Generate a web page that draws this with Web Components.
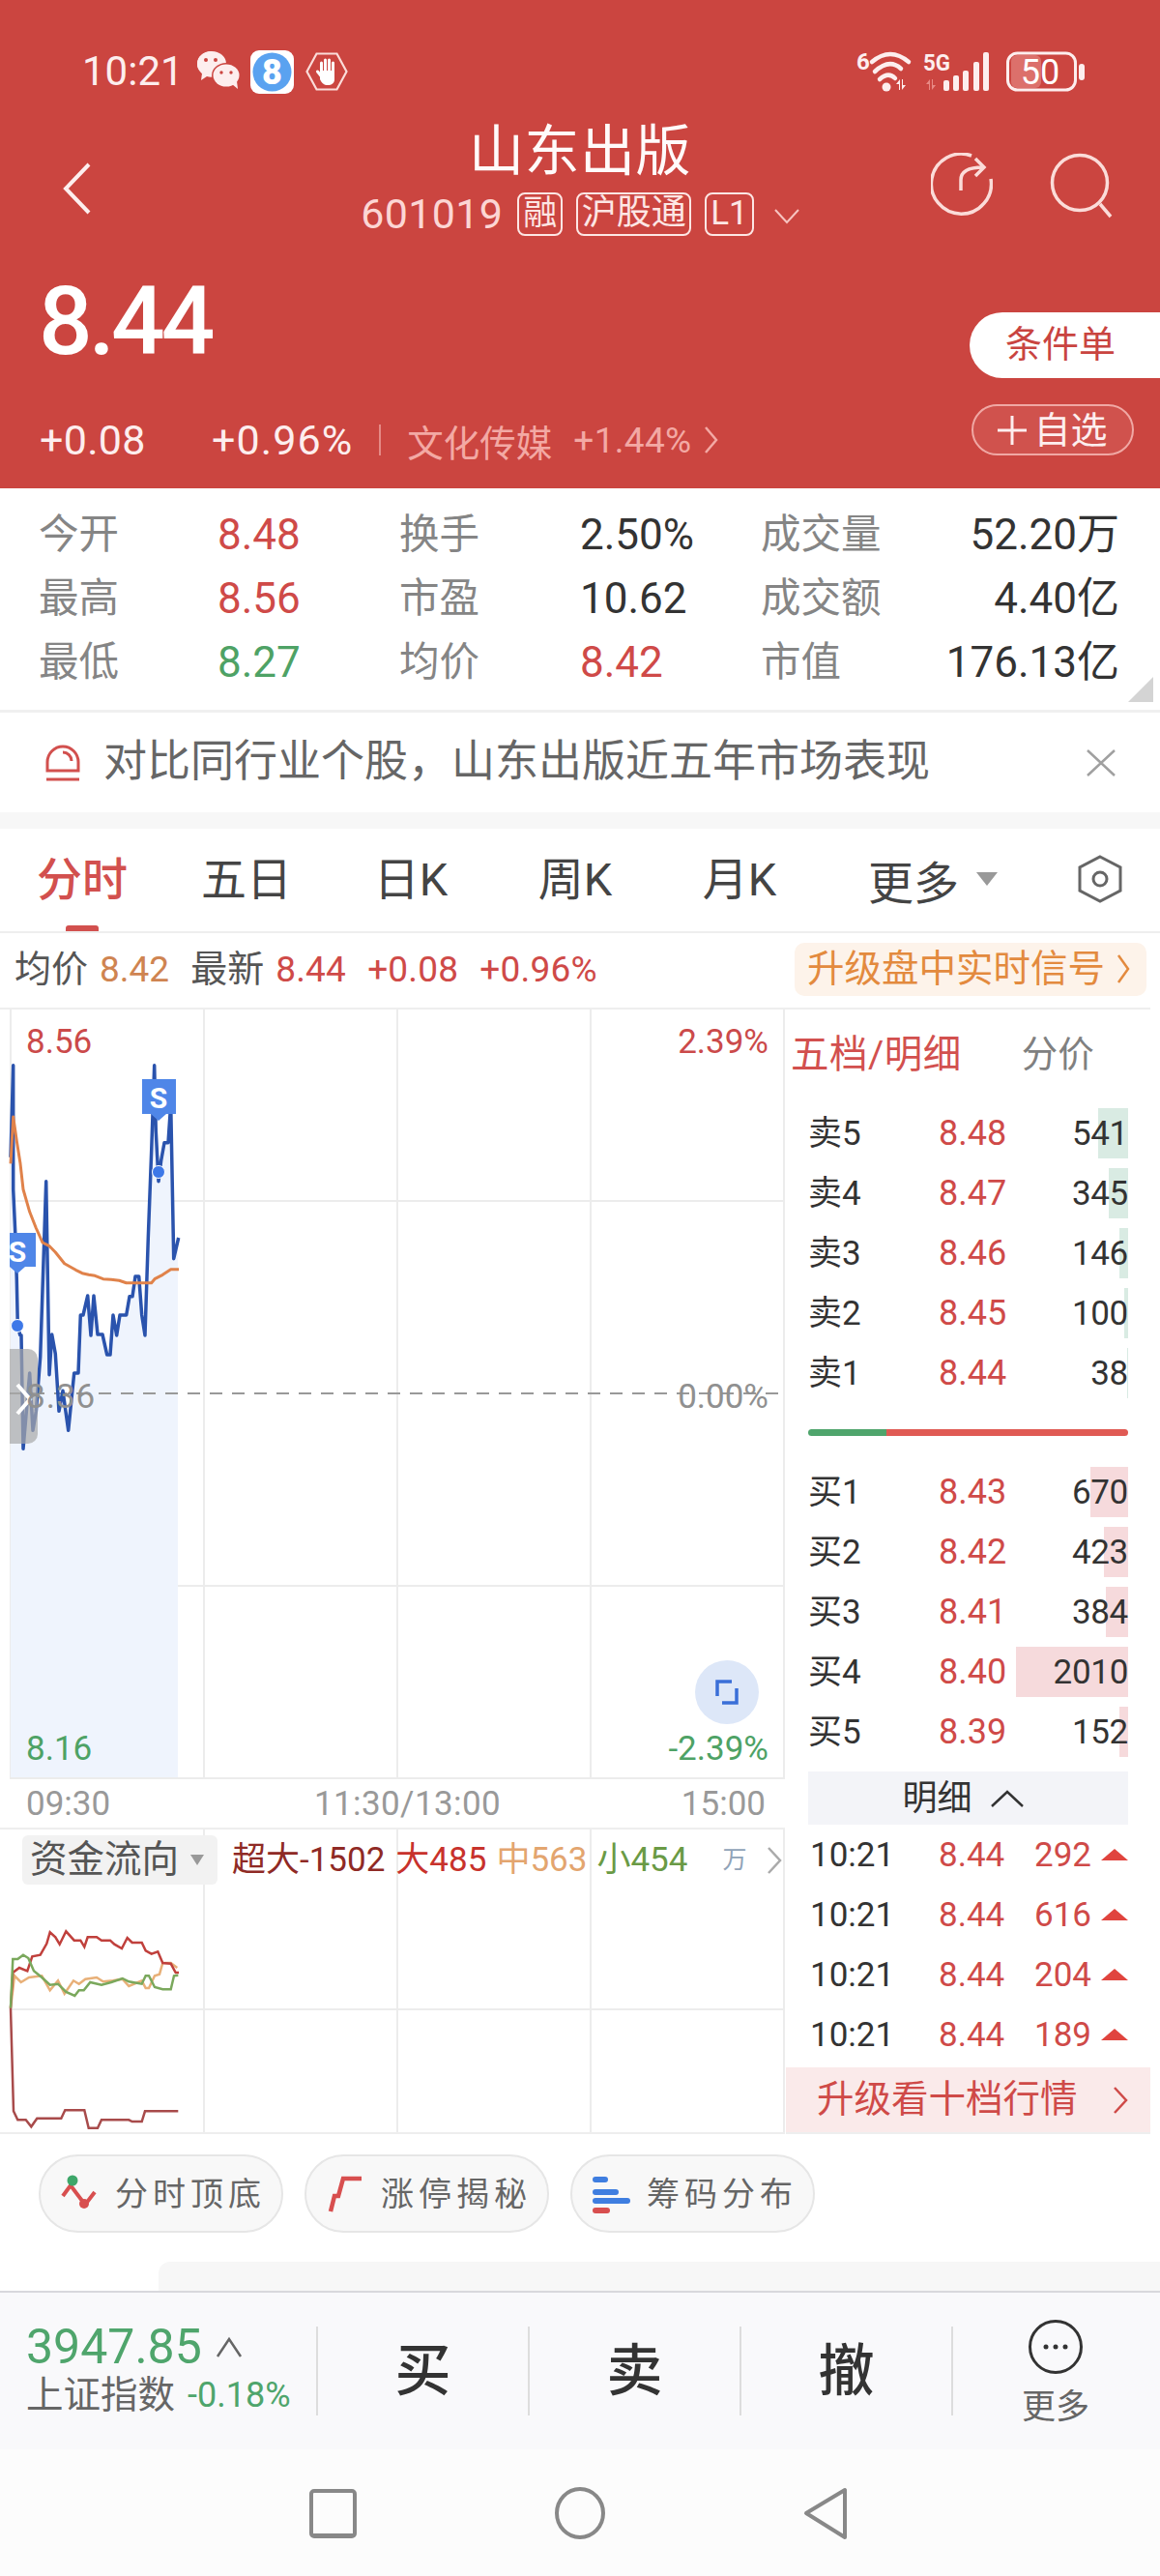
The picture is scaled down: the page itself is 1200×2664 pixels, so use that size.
<!DOCTYPE html>
<html lang="zh-CN"><head><meta charset="utf-8"><title>山东出版</title>
<style>
html,body{margin:0;padding:0;background:#fff}
body{font-family:Roboto,"Noto Sans CJK SC",sans-serif;width:1200px}
</style></head><body>
<stock-page>
  <status-bar></status-bar>
  <stock-header></stock-header>
  <stat-grid></stat-grid>
  <promo-banner></promo-banner>
  <chart-tabs></chart-tabs>
  <quote-line></quote-line>
  <chart-board>
    <minute-chart slot="left"></minute-chart>
    <time-axis slot="left"></time-axis>
    <flow-chart slot="left"></flow-chart>
    <order-book slot="right">
      <book-row label="卖5" price="8.48" vol="541" bar="31" side="sell"></book-row>
      <book-row label="卖4" price="8.47" vol="345" bar="20" side="sell"></book-row>
      <book-row label="卖3" price="8.46" vol="146" bar="9" side="sell"></book-row>
      <book-row label="卖2" price="8.45" vol="100" bar="4" side="sell"></book-row>
      <book-row label="卖1" price="8.44" vol="38" bar="1" side="sell"></book-row>
      <ratio-bar></ratio-bar>
      <book-row label="买1" price="8.43" vol="670" bar="39" side="buy"></book-row>
      <book-row label="买2" price="8.42" vol="423" bar="25" side="buy"></book-row>
      <book-row label="买3" price="8.41" vol="384" bar="23" side="buy"></book-row>
      <book-row label="买4" price="8.40" vol="2010" bar="116" side="buy"></book-row>
      <book-row label="买5" price="8.39" vol="152" bar="9" side="buy"></book-row>
      <detail-head></detail-head>
      <tick-row vol="292"></tick-row>
      <tick-row vol="616"></tick-row>
      <tick-row vol="204"></tick-row>
      <tick-row vol="189"></tick-row>
      <upgrade-strip></upgrade-strip>
    </order-book>
  </chart-board>
  <tool-chips>
    <tool-chip kind="a">分时顶底</tool-chip>
    <tool-chip kind="b">涨停揭秘</tool-chip>
    <tool-chip kind="c">筹码分布</tool-chip>
  </tool-chips>
  <trade-bar></trade-bar>
  <nav-bar></nav-bar>
</stock-page>
<script>
const FONT='font-family:Roboto,"Noto Sans CJK SC",sans-serif;';
function el(name,css,html){
  customElements.define(name,class extends HTMLElement{
    constructor(){super();this.attachShadow({mode:'open'});}
    connectedCallback(){
      const a=n=>this.getAttribute(n)||'';
      this.shadowRoot.innerHTML='<style>'+css+'</style>'+(typeof html==='function'?html(a):html);
    }
  });
}
const pts=(arr,ox,oy,s)=>arr.map(p=>(ox+p[0]*s).toFixed(1)+','+(oy+p[1]*s).toFixed(1)).join(' ');

el('stock-page',`:host{display:flex;flex-direction:column;width:1200px;height:2664px;overflow:hidden;background:#fff;color:#333;${FONT}}`,`<slot></slot>`);

el('status-bar',`:host{display:flex;justify-content:space-between;align-items:center;height:118px;padding:30px 77px 0 85px;box-sizing:border-box;background:#cb4540;color:#fdeeee}
.l{display:flex;align-items:center}.t{font-size:42px;width:119px;line-height:46px}
svg{display:block;overflow:visible}text{font-family:Roboto,sans-serif}`,
`<div class="l"><span class="t">10:21</span>
<svg width="44" height="40" viewBox="204 55 44 40" style="margin-right:11px"><path d="M219 54c-9 0-15 6-15 13 0 5 3 8 5 10l-1 7 6-4c3 1 5 1 8 0z" fill="#fdeeee"/><ellipse cx="219" cy="67" rx="15" ry="13" fill="#fdeeee"/><ellipse cx="234" cy="79" rx="15" ry="13" fill="#cb4540"/><ellipse cx="234" cy="79" rx="13.500" ry="11.500" fill="#fdeeee"/><path d="M240 88l6 5-1-8z" fill="#fdeeee"/><circle cx="213" cy="63" r="2" fill="#cb4540"/><circle cx="223" cy="63" r="2" fill="#cb4540"/><circle cx="229" cy="76" r="1.700" fill="#cb4540"/><circle cx="239" cy="76" r="1.700" fill="#cb4540"/></svg>
<svg width="45" height="45" viewBox="0 0 45 45" style="margin-right:12px"><rect width="45" height="45" rx="9" fill="#fff"/><circle cx="22.500" cy="22.500" r="20" fill="#5aa2f0"/><text x="22.500" y="35" text-anchor="middle" font-size="36" font-weight="900" fill="#fff">8</text></svg>
<svg width="44" height="40" viewBox="0 0 44 40"><path d="M1.500 20 11.500 1.500h21L42.500 20l-10 18.500h-21z" fill="none" stroke="#fbdcd9" stroke-width="2.200"/><g stroke="#fff" stroke-width="3" stroke-linecap="round"><path d="M16.500 11v10M20.500 8v12M24.500 8v12M28.500 11v11"/><path d="M12.500 20l4 5"/></g><path d="M15 19h15v9c0 4-3 6-7 6s-6-2-8-6z" fill="#fff"/></svg></div>
<svg width="238" height="60" viewBox="886 43 238 60"><text x="887" y="71" font-size="24" font-weight="700" fill="#fdeeee">6</text>
<g fill="none" stroke="#fdeeee" stroke-width="4.500" stroke-linecap="round"><path d="M903 63Q922 47 941 63"/><path d="M906 73Q921 59 933 70"/><path d="M911 81Q920 73 927 80"/></g><circle cx="918" cy="89" r="4.500" fill="#fdeeee"/>
<path d="M931 92v-6h-3l4-5v11zM935 81v6h3l-4 5V81z" fill="#fdeeee"/>
<text x="956" y="72" font-size="23" font-weight="700" fill="#fdeeee" textLength="28" lengthAdjust="spacingAndGlyphs">5G</text>
<path d="M962 92v-6h-3l4-5v11zM966 81v6h3l-4 5V81z" fill="#e88a85"/>
<g fill="#fdeeee"><rect x="977" y="82" width="6" height="11" rx="2"/><rect x="987" y="77" width="6" height="16" rx="2"/><rect x="997" y="72" width="6" height="21" rx="2"/><rect x="1008" y="63" width="6" height="30" rx="2"/><rect x="1018" y="53" width="6" height="40" rx="2"/></g>
<rect x="1047" y="56" width="31" height="34" rx="6" fill="#dc706b"/><rect x="1043.500" y="54" width="70" height="38" rx="10" fill="none" stroke="#fdeeee" stroke-width="3"/><text x="1077" y="86" text-anchor="middle" font-size="36" fill="#fff">50</text><rect x="1117" y="65" width="6" height="17" rx="3" fill="#fdeeee"/></svg>`);

el('stock-header',`:host{display:block;background:#cb4540;height:387px;color:#fff;position:relative}
.top{display:grid;grid-template-columns:1fr 520px 1fr;height:130px}
.back{padding:50px 0 0 64px}.ctr{display:flex;flex-direction:column;align-items:center}
.name{font-size:57px;line-height:78px;height:78px;letter-spacing:.5px;color:#fffafa}
.sub{display:flex;align-items:center;gap:14px;height:50px;color:#fcd6d4;font-size:43px;white-space:nowrap;flex:none}
.code{letter-spacing:.3px;margin-right:1px}
.tag{flex:none;border:2px solid #fde6e4;border-radius:8px;height:41px;line-height:39px;font-size:35px;padding:0 4px;color:#fde6e4;box-sizing:content-box}
.tag.w{padding:0 3.500px;font-size:36px}
.ic{display:flex;justify-content:flex-end;padding:40px 48px 0 0;gap:59px}
.main{display:flex;justify-content:space-between}
.price{font-size:98px;line-height:96px;margin:37px 0 0 40px;font-weight:500;letter-spacing:-4px}
.chg{display:flex;align-items:center;height:50px;margin:49px 0 0 41px;font-size:43px;letter-spacing:.3px;color:#fdeeee;white-space:nowrap}
.wide{letter-spacing:1.100px}
.sep{width:2px;height:32px;background:#e58a86;margin:0 27px}
.ind{color:#f3a9a4;font-size:37.500px;letter-spacing:0}.pc{color:#f3a9a4;font-size:37px;letter-spacing:.3px;margin-left:22px}
.r{display:flex;flex-direction:column;align-items:flex-end}
.cond{margin-top:75px;width:197px;height:68px;background:#fff;border-radius:34px 0 0 34px;color:#c94440;font-size:38px;line-height:66px;box-sizing:border-box;padding-left:37px}
.fav{margin:27px 27px 0 0;width:168px;height:53px;border:2px solid #f0a8a4;border-radius:27px;box-sizing:border-box;background:#d0524d;color:#fdeeee;font-size:38px;display:flex;align-items:center;justify-content:center;gap:7px;line-height:1}`,
`<div class="top"><div class="back"><svg width="30" height="54" viewBox="62 166 30 54"><path d="M90 168 66 193l24 25" fill="none" stroke="#fdeeee" stroke-width="4"/></svg></div>
<div class="ctr"><div class="name">山东出版</div><div class="sub"><span class="code">601019</span><span class="tag">融</span><span class="tag w">沪股通</span><span class="tag">L1</span><svg width="26" height="16" viewBox="0 0 26 16" style="margin:6px 0 0 7px"><path d="M1 1l12 13L25 1" fill="none" stroke="#f7c4c0" stroke-width="2"/></svg></div></div>
<div class="ic"><svg width="64" height="66" viewBox="965 159 64 66"><path d="M1007 162A31 31 0 1 0 1027 186" fill="none" stroke="#fbdcd9" stroke-width="3.500"/><path d="M996 198v-11c0-8 6-13 23-13M1011 165l9 9-9 9" fill="none" stroke="#fbdcd9" stroke-width="3.500"/></svg>
<svg width="66" height="68" viewBox="1087 158 66 68"><circle cx="1118" cy="189" r="28.500" fill="none" stroke="#fbdcd9" stroke-width="3.500"/><path d="M1139 211l11 13" stroke="#fbdcd9" stroke-width="3.500" fill="none"/></svg></div></div>
<div class="main"><div><div class="price">8.44</div>
<div class="chg"><span style="width:178px">+0.08</span><span class="wide">+0.96%</span><span class="sep"></span><span class="ind">文化传媒</span><span class="pc">+1.44%</span><svg width="14" height="30" viewBox="0 0 14 30" style="margin-left:14px"><path d="M1 2l11 13L1 28" fill="none" stroke="#f3a9a4" stroke-width="2.500"/></svg></div></div>
<div class="r"><div class="cond">条件单</div><div class="fav"><svg width="30" height="30" viewBox="0 0 30 30"><path d="M15 0v30M0 15h30" stroke="#fdeeee" stroke-width="3"/></svg><span>自选</span></div></div></div>`);

el('stat-grid',`:host{display:grid;grid-template-columns:185px 188px 187px 187px 1fr;grid-auto-rows:66px;align-items:center;height:232px;box-sizing:border-box;padding:15px 42px 0 40px;border-bottom:3px solid #f0f0f0;position:relative;background:#fff;font-size:44px;color:#333;line-height:1;flex:none}
.k{color:#858585;font-size:41.500px}.up{color:#cf4a48}.dn{color:#4ea265}
.lr{display:flex;justify-content:space-between;align-items:center}
.tri{position:absolute;right:7px;bottom:8px;width:0;height:0;border-left:26px solid transparent;border-bottom:26px solid #d4d4d4}`,
`<span class="k">今开</span><span class="up">8.48</span><span class="k">换手</span><span>2.50%</span><span class="lr"><span class="k">成交量</span><span>52.20万</span></span>
<span class="k">最高</span><span class="up">8.56</span><span class="k">市盈</span><span>10.62</span><span class="lr"><span class="k">成交额</span><span>4.40亿</span></span>
<span class="k">最低</span><span class="dn">8.27</span><span class="k">均价</span><span class="up">8.42</span><span class="lr"><span class="k">市值</span><span>176.13亿</span></span>
<i class="tri"></i>`);

el('promo-banner',`:host{display:flex;align-items:center;height:103px;padding:0 45px 0 46px;background:#fff;border-bottom:17px solid #f7f7f7;box-sizing:content-box;color:#666;font-size:45px;flex:none}
span{flex:1;margin-left:23px;line-height:1;padding-bottom:2px}svg{display:block}`,
`<svg width="38" height="40" viewBox="0 0 38 40"><path d="M3 28V19a16 16 0 0 1 32 0v9zM2 28h34M2 37h34" fill="none" stroke="#d2504e" stroke-width="3"/><path d="M19 9a9 9 0 0 1 9 9" fill="none" stroke="#d2504e" stroke-width="3"/></svg>
<span>对比同行业个股，山东出版近五年市场表现</span>
<svg width="32" height="30" viewBox="0 0 32 30"><path d="M2 2l28 26M30 2 2 28" stroke="#a0a0a0" stroke-width="2.500"/></svg>`);

el('chart-tabs',`:host{display:flex;align-items:center;height:108px;box-sizing:border-box;border-bottom:2px solid #eee;background:#fff;font-size:47px;color:#444;padding-bottom:2px;position:relative;flex:none}
.t{width:170px;text-align:center;line-height:1;flex:none}.on{color:#d2504e;font-weight:500}
.u{position:absolute;left:68px;bottom:0;width:34px;height:6px;background:#d2504e;border-radius:3px 3px 0 0}
.more{margin-left:48px;display:flex;align-items:center}.tr{width:0;height:0;border:11px solid transparent;border-top:14px solid #999;border-bottom:0;margin-left:18px}
svg{margin-left:83px;display:block}`,
`<span class="t on">分时</span><span class="t">五日</span><span class="t">日K</span><span class="t">周K</span><span class="t">月K</span><i class="u"></i>
<span class="more">更多<i class="tr"></i></span>
<svg width="46" height="50" viewBox="0 0 46 50"><path d="M23 2 44 13v24L23 48 2 37V13z" fill="none" stroke="#666" stroke-width="3"/><circle cx="23" cy="25" r="7" fill="none" stroke="#666" stroke-width="3"/></svg>`);

el('quote-line',`:host{display:flex;align-items:center;height:77px;padding:0 14px 3px 15px;box-sizing:border-box;background:#fff;font-size:37px;line-height:1;color:#555;flex:none}
.k{font-size:38px;margin-right:12px}.o{color:#cf8451;margin-right:22px}.r{color:#cf4a48;margin-right:22px;letter-spacing:.2px}
.up{margin-left:auto;width:364px;height:55px;background:#fdf3ea;border-radius:10px;color:#e38a3e;font-size:38.500px;display:flex;align-items:center;padding-left:13px;box-sizing:border-box;gap:12px}`,
`<span class="k">均价</span><span class="o">8.42</span><span class="k">最新</span><span class="r">8.44</span><span class="r">+0.08</span><span class="r">+0.96%</span>
<span class="up">升级盘中实时信号<svg width="14" height="32" viewBox="0 0 14 32"><path d="M2 2l10 14L2 30" fill="none" stroke="#e38a3e" stroke-width="2.500"/></svg></span>`);

el('chart-board',`:host{display:flex;width:1190px;height:1165px;border-top:2px solid #eee;box-sizing:border-box;background:#fff;flex:none}
.l{width:812px;flex:none;display:flex;flex-direction:column}.r{flex:1;display:flex;flex-direction:column;min-width:0}`,
`<div class="l"><slot name="left"></slot></div><div class="r"><slot name="right"></slot></div>`);

const blue=[[33,500],[41,215],[41,600],[47,730],[52,880],[55,1020],[62,1052],[66,1052],[72,1405],[92,1170],[102,1348],[112,1290],[125,1120],[143,575],[153,1175],[161,1050],[172,1110],[183,1288],[195,1225],[212,1348],[230,1170],[243,1170],[250,990],[258,990],[272,930],[282,1053],[291,930],[303,1050],[318,1050],[332,1113],[342,1113],[351,990],[362,1053],[372,990],[392,990],[402,932],[411,932],[420,870],[431,870],[440,990],[450,1053],[460,750],[470,480],[479,215],[484,420],[492,575],[500,510],[510,455],[522,455],[530,335],[539,815],[554,750]];
const orange=[[33,520],[41,375],[52,450],[63,520],[72,600],[92,670],[112,720],[132,765],[152,775],[172,795],[200,830],[235,850],[255,860],[275,865],[295,868],[320,878],[345,880],[370,883],[392,890],[430,890],[470,890],[480,878],[505,865],[530,848],[555,848]];
const OY=1030-1044;
el('minute-chart',`:host{display:block;width:812px;height:796px;flex:none}svg{display:block}text{font-family:Roboto,sans-serif;font-size:35px}.s{font-size:30px;font-weight:700;fill:#fff}`,
()=>`<svg width="812" height="796" viewBox="0 0 812 796">
<defs><clipPath id="c"><rect x="10" y="0" width="802" height="796"/></clipPath></defs>
<path d="M11 0V796M211 0V796M411 0V796M611 0V796M811 0V796" stroke="#ececec" stroke-width="2" fill="none"/>
<path d="M10 198H812M10 596H812M10 795H812" stroke="#ececec" stroke-width="2" fill="none"/>
<polygon points="11,${(OY+500/3).toFixed(1)} ${pts(blue,0,OY,1/3)} 184,${(OY+750/3).toFixed(1)} 184,794 11,794" fill="#eff4fd"/>
<path d="M10 397H812" stroke="#999" stroke-width="2" stroke-dasharray="13 10" fill="none"/>
<polyline points="${pts(blue,0,OY,1/3)}" fill="none" stroke="#2a53ad" stroke-width="3.500" stroke-linejoin="round"/>
<polyline points="${pts(orange,0,OY,1/3)}" fill="none" stroke="#e0824a" stroke-width="3" stroke-linejoin="round"/>
<path d="M10 351H29a10 10 0 0 1 10 10v78a10 10 0 0 1-10 10H10z" fill="#a8a8a8" fill-opacity=".7"/>
<path d="M18 388l13 15-13 15" fill="none" stroke="#fff" stroke-width="4"/>
<text x="27" y="45" fill="#cb4a4a">8.56</text><text x="795" y="45" text-anchor="end" fill="#cb4a4a">2.39%</text>
<text x="27" y="412" fill="#909090" letter-spacing="1">8.36</text><text x="795" y="412" text-anchor="end" fill="#909090">0.00%</text>
<text x="27" y="776" fill="#4ea265">8.16</text><text x="795" y="776" text-anchor="end" fill="#4ea265">-2.39%</text>
<g clip-path="url(#c)"><path d="M147 72h35v36h-10l-8 7-8-7h-9z" fill="#4f86e8"/><text class="s" x="164" y="102" text-anchor="middle">S</text>
<path d="M5 231h32v35h-11l-8 7-8-7H5z" fill="#4f86e8"/><text class="s" x="18" y="261" text-anchor="middle">S</text>
<circle cx="164" cy="168" r="6.500" fill="#3d78e8" stroke="#fff"/><circle cx="18" cy="327" r="6.500" fill="#3d78e8" stroke="#fff"/></g>
<circle cx="752" cy="706" r="33" fill="#dde7f8"/><path d="M742 710v-15h15M762 702v15h-15" fill="none" stroke="#3a6fd8" stroke-width="3.500"/>
</svg>`);

el('time-axis',`:host{display:flex;justify-content:space-between;align-items:center;height:50px;width:812px;box-sizing:border-box;padding:0 20px 0 27px;font-size:35px;color:#999;line-height:1;flex:none}
.m{margin-left:24px;letter-spacing:.4px}`,
`<span>09:30</span><span class="m">11:30/13:00</span><span>15:00</span>`);

const fr=[[33,290],[40,180],[60,165],[85,175],[100,130],[125,125],[145,90],[155,55],[172,70],[185,92],[205,52],[230,80],[250,80],[262,100],[272,70],[300,70],[315,80],[342,80],[355,92],[378,105],[395,72],[410,87],[440,87],[452,112],[470,122],[490,115],[505,150],[530,152],[545,180],[555,180]];
const fo=[[33,290],[45,190],[65,210],[90,195],[130,190],[155,235],[180,205],[200,245],[228,205],[245,215],[265,200],[300,195],[320,208],[350,205],[380,200],[400,222],[440,205],[452,228],[462,228],[480,190],[495,185],[505,150],[530,150],[550,165]];
const fg=[[33,290],[40,138],[55,138],[72,125],[88,135],[105,175],[130,195],[155,218],[180,215],[205,240],[232,252],[245,235],[260,235],[280,210],[315,218],[345,210],[380,198],[400,208],[440,215],[452,190],[462,190],[480,225],[505,232],[530,232],[540,190],[553,188]];
const fd=[[33,290],[42,610],[55,637],[80,637],[97,658],[115,632],[190,632],[202,607],[262,607],[275,662],[303,662],[315,637],[400,637],[410,642],[440,642],[450,610],[553,610]];
const FY=1980-1892;
el('flow-chart',`:host{display:block;position:relative;width:812px;height:313px;flex:none;border-top:2px solid #eee;border-bottom:2px solid #eee;box-sizing:content-box}
svg{display:block;position:absolute;left:0;top:0}
.head{position:relative;display:flex;align-items:center;height:51px;margin-top:6px;padding-left:23px;font-size:35px;line-height:1;white-space:nowrap}
.chip{width:202px;height:51px;background:#f2f2f2;border-radius:6px;display:flex;align-items:center;padding-left:8px;box-sizing:border-box;font-size:38.500px;color:#555;margin-right:15px}
.chip i{width:0;height:0;border:7px solid transparent;border-top:11px solid #999;border-bottom:0;margin-left:12px}
.a{color:#8f2a25;margin-right:11px}.b{color:#c8322c;margin-right:10px}.c{color:#e3a56f;margin-right:10px}.d{color:#6a9a45}
.w{color:#90a3b8;font-size:25px;margin-left:36px;margin-right:21px}`,
()=>`<svg width="812" height="313" viewBox="0 0 812 313"><path d="M10 186H812M211 0V313M411 0V313M611 0V313M811 0V313" stroke="#ececec" stroke-width="2" fill="none"/>
<polyline points="${pts(fo,0,FY,1/3)}" fill="none" stroke="#e8b078" stroke-width="2.500"/>
<polyline points="${pts(fr,0,FY,1/3)}" fill="none" stroke="#c0403c" stroke-width="2.500"/>
<polyline points="${pts(fg,0,FY,1/3)}" fill="none" stroke="#7aa85c" stroke-width="2.500"/>
<polyline points="${pts(fd,0,FY,1/3)}" fill="none" stroke="#a84b4b" stroke-width="2.500"/></svg>
<div class="head"><span class="chip">资金流向<i></i></span><span class="a">超大-1502</span><span class="b">大485</span><span class="c">中563</span><span class="d">小454</span><span class="w">万</span><svg style="position:static" width="16" height="30" viewBox="0 0 16 30"><path d="M2 2l12 13L2 28" fill="none" stroke="#aaa" stroke-width="2.500"/></svg></div>`);

el('order-book',`:host{display:flex;flex-direction:column;padding:0 23px 0 24px;flex:1;font-size:36px}
.h{height:97px;display:flex;align-items:center;margin-left:-18px;padding-bottom:4px;box-sizing:border-box;line-height:1;flex:none}
.a{color:#d2504e;font-size:39.500px;letter-spacing:.5px}.b{color:#808080;font-size:37.500px;margin-left:62px}`,
`<div class="h"><span class="a">五档/明细</span><span class="b">分价</span></div><slot></slot>`);

el('book-row',`:host{display:grid;grid-template-columns:135px 1fr auto;align-items:center;height:62px;position:relative;font-size:36px;line-height:1;color:#333;flex:none}
.bar{position:absolute;right:0;top:5px;height:52px}.sell{background:#d9ebe3}.buy{background:#f6dadc}
span{position:relative}.l{font-size:35px}.p{color:#cf4a48}.v{font-size:35px;letter-spacing:-.3px}`,
a=>`<i class="bar ${a('side')}" style="width:${a('bar')}px"></i><span class="l">${a('label')}</span><span class="p">${a('price')}</span><span class="v">${a('vol')}</span>`);

el('ratio-bar',`:host{display:flex;height:7px;border-radius:4px;overflow:hidden;margin:27px 0;flex:none}
i{display:block;background:#4fa56c;width:81px}b{display:block;flex:1;background:#e05a54}`,`<i></i><b></b>`);

el('detail-head',`:host{display:flex;align-items:center;justify-content:center;height:55px;background:#f3f4f8;margin-top:10px;font-size:36px;color:#333;line-height:1;gap:18px;flex:none;padding-right:10px}`,
`<span>明细</span><svg width="36" height="20" viewBox="0 0 36 20"><path d="M2 18 18 3l16 15" fill="none" stroke="#333" stroke-width="2.500"/></svg>`);

el('tick-row',`:host{display:grid;grid-template-columns:135px 1fr auto;align-items:center;height:62px;font-size:35px;line-height:1;color:#333;flex:none}
.t{padding-left:2px}.p{color:#cf4a48}.v{color:#cf4a48;display:flex;align-items:center;gap:10px}
i{width:0;height:0;border:14px solid transparent;border-bottom:12px solid #e0443e;border-top:0}`,
a=>`<span class="t">10:21</span><span class="p">8.44</span><span class="v">${a('vol')}<i></i></span>`);

el('upgrade-strip',`:host{display:flex;align-items:center;height:67px;margin:3px -23px 0 -23px;padding-left:32px;background:#faeaea;color:#cf4a48;font-size:38.500px;line-height:1;flex:none;border-bottom:2px solid #eee;box-sizing:content-box}
svg{margin-left:36px}`,
`<span>升级看十档行情</span><svg width="16" height="30" viewBox="0 0 16 30"><path d="M2 2l12 13L2 28" fill="none" stroke="#cf4a48" stroke-width="2.500"/></svg>`);

el('tool-chips',`:host{display:block;height:162px;background:#fff;position:relative;flex:none}
.row{display:flex;gap:22px;padding:21px 0 0 40px}
.card{position:absolute;left:164px;right:0;bottom:0;height:30px;background:#f7f7f7;border-radius:12px 0 0 0}`,
`<div class="row"><slot></slot></div><div class="card"></div>`);

const chipIcons={
a:`<path d="M4 24l8-11 15 20 10-13" fill="none" stroke="#d84f4f" stroke-width="4"/><circle cx="14" cy="8" r="5.500" fill="#3ea76a"/><circle cx="26" cy="32" r="5" fill="#d84f4f"/>`,
b:`<path d="M6 40l4-16h4l5-18h19" fill="none" stroke="#d84f4f" stroke-width="4.500"/>`,
c:`<g stroke-width="6" stroke-linecap="round" fill="none"><path d="M5 7H15M5 20H26" stroke="#3f7ee0"/><path d="M5 29H38" stroke="#3f7ee0"/><path d="M5 39H17" stroke="#d84f4f"/></g>`};
el('tool-chip',`:host{display:flex;align-items:center;width:253px;height:81px;box-sizing:border-box;border:2px solid #e6e6e6;border-radius:41px;background:#f8f8f8;padding-left:19px;color:#666;font-size:34px;letter-spacing:5px;line-height:1;flex:none}
svg{margin-right:16px;flex:none;display:block}`,
a=>`<svg width="42" height="44" viewBox="0 0 42 44">${chipIcons[a('kind')]}</svg><slot></slot>`);

el('trade-bar',`:host{display:flex;height:164px;background:#f9f9fb;border-top:2px solid #d8d8dc;box-sizing:border-box;flex:none}
.ix{width:327px;flex:none;padding:31px 0 0 27px;box-sizing:border-box;line-height:1}
.n{font-size:50px;color:#4fa56c;display:flex;align-items:center;gap:14px;height:50px}
.s{display:flex;align-items:center;margin-top:1px;height:48px;color:#666;font-size:38.500px}.s b{font-weight:400;font-size:36px;color:#4fa56c;margin-left:13px}
.btn{width:219px;flex:none;height:92px;margin-top:35px;border-left:2px solid #ddd;box-sizing:border-box;display:flex;align-items:center;justify-content:center;font-size:58px;font-weight:500;color:#333;line-height:1}
.more{flex:1;margin-top:35px;height:92px;border-left:2px solid #ddd;box-sizing:border-box;position:relative}
.more svg{position:absolute;top:-8px;left:77px}.more span{position:absolute;top:66px;left:71px;font-size:35px;color:#666;line-height:1;white-space:nowrap}`,
`<div class="ix"><div class="n">3947.85<svg width="28" height="24" viewBox="0 0 28 24"><path d="M2 22 14 4l12 18" fill="none" stroke="#666" stroke-width="2.500"/></svg></div><div class="s">上证指数<b>-0.18%</b></div></div>
<div class="btn">买</div><div class="btn">卖</div><div class="btn">撤</div>
<div class="more"><svg width="58" height="58" viewBox="0 0 58 58"><circle cx="29" cy="29" r="26.500" fill="none" stroke="#333" stroke-width="3"/><circle cx="19" cy="29" r="2.500" fill="#333"/><circle cx="29" cy="29" r="2.500" fill="#333"/><circle cx="39" cy="29" r="2.500" fill="#333"/></svg><span>更多</span></div>`);

el('nav-bar',`:host{display:block;flex:1;background:#fcfcfc}svg{display:block}`,
`<svg width="1200" height="131" viewBox="0 2533 1200 131"><rect x="322" y="2576" width="45" height="47" rx="3" fill="none" stroke="#888" stroke-width="4"/><path d="M322 2622h45" stroke="#888" stroke-width="4"/><ellipse cx="600" cy="2599" rx="24" ry="25" fill="none" stroke="#888" stroke-width="4"/><path d="M874 2575v49l-40-25z" fill="none" stroke="#888" stroke-width="4" stroke-linejoin="round"/></svg>`);
</script></body></html>
